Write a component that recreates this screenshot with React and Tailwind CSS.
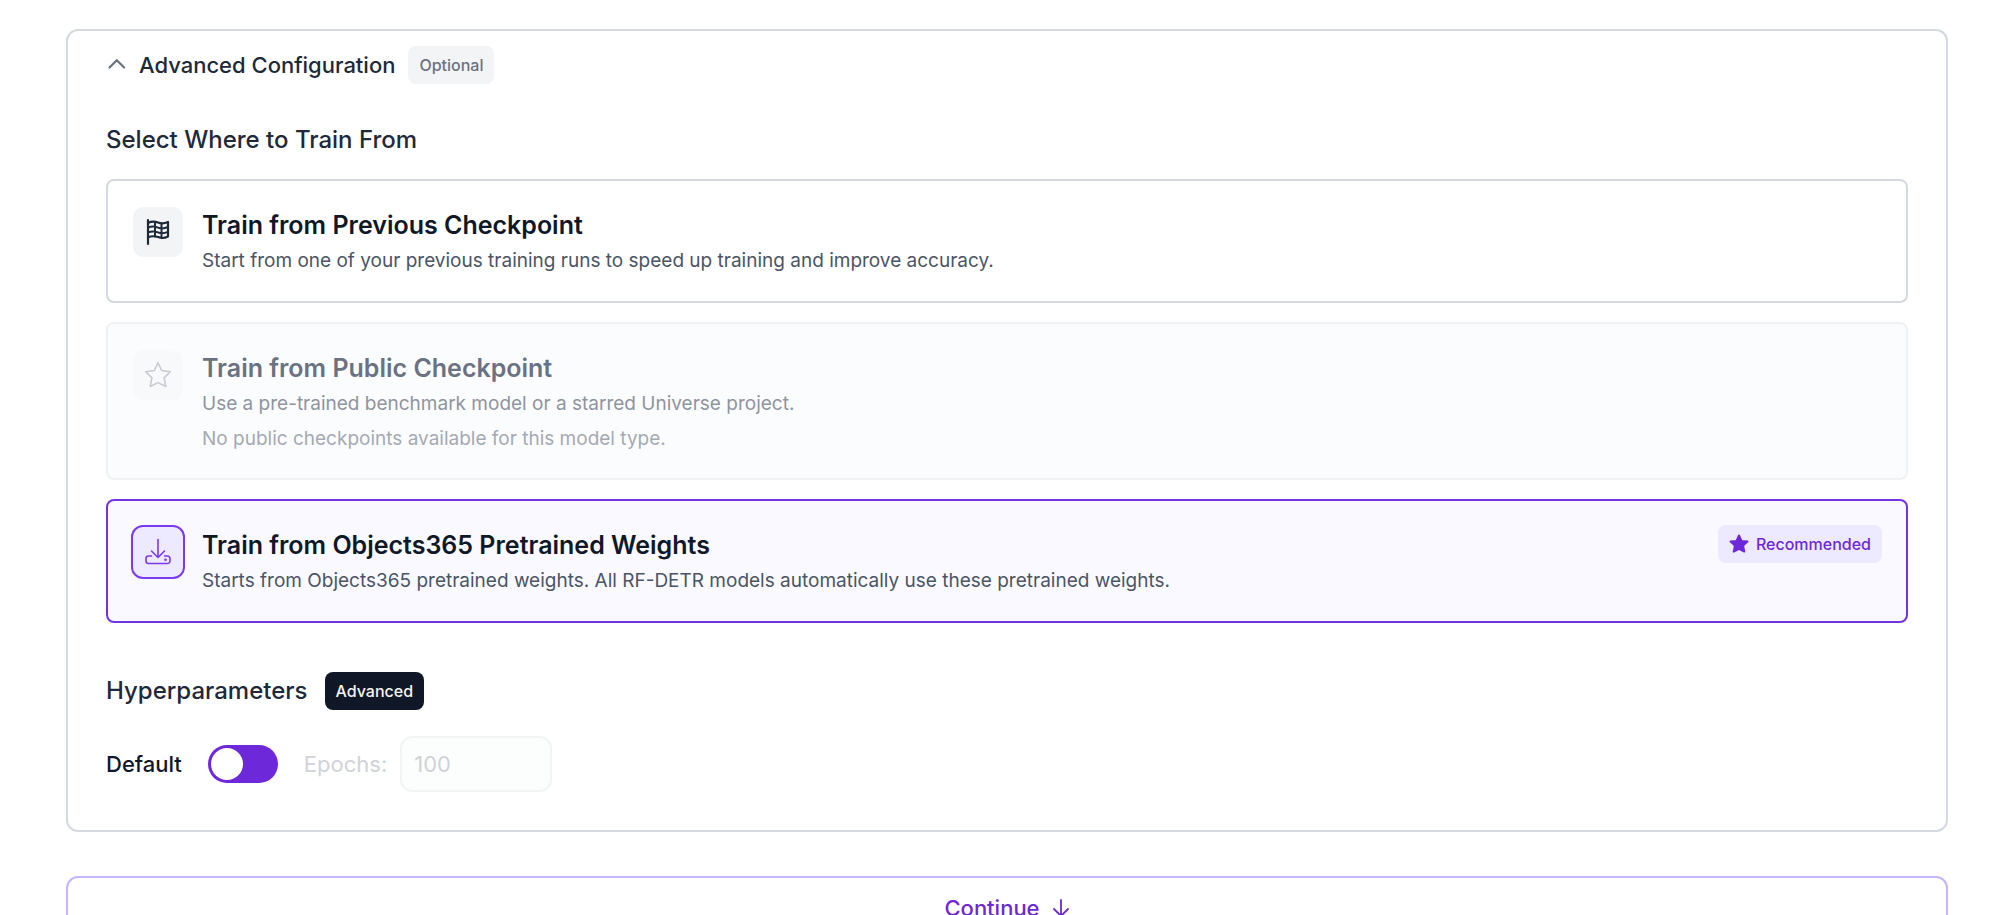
import { useState } from "react";

function FlagIcon({ className }) {
  return (
    <svg viewBox="-2 -1 28 28" fill="none" stroke="currentColor" strokeWidth="2.200" strokeLinecap="round" strokeLinejoin="round" className={className}>
      <path d="M2 1v24" />
      <path d="M2 4c4-2 7-1.600 10-.4s6 1.200 10-.6v14.500c-4 2.200-7 1.800-10 .6s-6-1.200-10 0" />
      <path strokeWidth="2" d="M2 8.600c4-1.600 7-1.200 10 0s6 1.200 10-.6M2 13.400c4-1.600 7-1.200 10 0s6 1.200 10-.6M9 3v14.500M15.500 4.600v14.200" />
    </svg>
  );
}

function StarIcon({ className }) {
  return (
    <svg viewBox="0 0 28 28" fill="none" stroke="currentColor" strokeWidth="1.600" strokeLinejoin="round" className={className}>
      <path d="M14 1.800l3.700 7.700 8.600 1.300-6.200 6.100 1.700 8.600L14 21.600l-7.800 3.900 1.700-8.600-6.200-6.100 8.600-1.300z" />
    </svg>
  );
}

function DownloadIcon({ className }) {
  return (
    <svg viewBox="0 0 28 28" fill="none" stroke="currentColor" strokeWidth="1.600" strokeLinecap="round" strokeLinejoin="round" className={className}>
      <path d="M14 1.500v18M7.500 13l6.500 6.500L20.500 13" />
      <path d="M7.500 18H4.500A2.500 2.500 0 0 0 2 20.500V23a2.500 2.500 0 0 0 2.500 2.500h19A2.500 2.500 0 0 0 26 23v-2.500a2.500 2.500 0 0 0-2.500-2.500H20.500" />
      <circle cx="21.500" cy="21.700" r="1.300" fill="currentColor" stroke="none" />
    </svg>
  );
}

function ChevronIcon({ open }) {
  return (
    <svg
      viewBox="0 0 20 20"
      fill="none"
      stroke="currentColor"
      strokeWidth="2.200"
      strokeLinecap="round"
      strokeLinejoin="round"
      className={open ? "size-5 text-gray-500" : "size-5 rotate-180 text-gray-500"}
    >
      <path d="M3.500 12.500l7.300-7.300 7.300 7.300" />
    </svg>
  );
}

const options = [
  {
    id: "previous",
    title: "Train from Previous Checkpoint",
    description: "Start from one of your previous training runs to speed up training and improve accuracy.",
    icon: FlagIcon,
  },
  {
    id: "public",
    title: "Train from Public Checkpoint",
    description: "Use a pre-trained benchmark model or a starred Universe project.",
    note: "No public checkpoints available for this model type.",
    icon: StarIcon,
    disabled: true,
  },
  {
    id: "pretrained",
    title: "Train from Objects365 Pretrained Weights",
    description: "Starts from Objects365 pretrained weights. All RF-DETR models automatically use these pretrained weights.",
    icon: DownloadIcon,
    recommended: true,
  },
];

function OptionCard({ option, selected, onSelect }) {
  const Icon = option.icon;
  let card = "border-[#d5d8e0] bg-white";
  let tile = "border-transparent bg-gray-100 text-gray-800";
  if (option.disabled) {
    card = "border-[#eff1f4] bg-[#fbfcfe]";
    tile = "border-transparent bg-[#f8f9fb] text-[#c8cbd1]";
  } else if (selected) {
    card = "border-[#7433e0] bg-[#faf9ff]";
    tile = "border-[#7c3aed] bg-[#ede9fe] text-[#7c3aed]";
  }

  return (
    <button
      type="button"
      role="radio"
      aria-checked={selected}
      disabled={option.disabled}
      onClick={onSelect}
      className={`flex w-full items-start gap-[17px] rounded-lg border-2 pt-6 pr-6 pb-[22px] pl-[23px] text-left ${card}`}
    >
      <span className={`flex size-[54px] shrink-0 items-center justify-center rounded-xl border-2 bg-clip-padding ${tile}`}>
        <Icon className="size-7" />
      </span>
      <span className="flex flex-1 flex-col pt-0.5">
        <span className={`text-[25px] leading-9 font-semibold ${option.disabled ? "text-gray-500" : "text-gray-900"}`}>
          {option.title}
        </span>
        <span className={`text-[19px] leading-9 ${option.disabled ? "text-[#8f949e]" : "text-gray-600"}`}>
          {option.description}
        </span>
        {option.note && <span className="text-[19px] leading-[34px] text-[#a5a9b3]">{option.note}</span>}
      </span>
      {option.recommended && (
        <span className="flex h-[38px] items-center gap-[7px] rounded-lg bg-[#ede9fe] px-[11px] text-base font-medium text-[#6d28d9]">
          <svg viewBox="0 0 20 20" fill="currentColor" stroke="currentColor" strokeWidth="2" strokeLinejoin="round" className="size-5">
            <path d="M10 1.500l2.500 5.400 6 .7-4.400 4 1.200 6L10 14.800l-5.300 2.800 1.200-6-4.400-4 6-.7z" />
          </svg>
          Recommended
        </span>
      )}
    </button>
  );
}

export default function App() {
  const [open, setOpen] = useState(true);
  const [source, setSource] = useState("pretrained");
  const [custom, setCustom] = useState(false);
  const [epochs, setEpochs] = useState(100);

  return (
    <main className="h-screen overflow-hidden bg-white pt-[29px] pr-[52px] pl-[66px] font-[Inter,sans-serif] text-gray-800">
      <section className="rounded-xl border-2 border-[#d5d8e0] px-[38px] pt-[15px] pb-[38px]">
        <button type="button" aria-expanded={open} onClick={() => setOpen(!open)} className="flex items-center">
          <ChevronIcon open={open} />
          <span className="ml-[13px] text-[22px] leading-8 font-medium">Advanced Configuration</span>
          <span className="ml-[13px] flex h-[38px] items-center rounded-lg bg-gray-100 px-[11px] text-base font-medium text-gray-500">
            Optional
          </span>
        </button>

        {open && (
          <>
            <h2 className="mt-[38px] text-2xl leading-9 font-medium">Select Where to Train From</h2>
            <div role="radiogroup" aria-label="Select Where to Train From" className="mt-[21px] flex flex-col gap-[19px]">
              {options.map((option) => (
                <OptionCard
                  key={option.id}
                  option={option}
                  selected={source === option.id}
                  onSelect={() => setSource(option.id)}
                />
              ))}
            </div>

            <div className="mt-[49px] flex items-center gap-[17px]">
              <h2 className="text-2xl leading-9 font-medium">Hyperparameters</h2>
              <span className="flex h-[38px] items-center rounded-lg bg-gray-900 px-[11px] text-base font-medium text-gray-100">
                Advanced
              </span>
            </div>

            <div className="mt-[26px] flex items-center">
              <label htmlFor="custom" className="text-[22px] font-medium text-gray-900">
                {custom ? "Custom" : "Default"}
              </label>
              <input
                id="custom"
                type="checkbox"
                role="switch"
                checked={custom}
                onChange={(e) => setCustom(e.target.checked)}
                className="ml-[26px] flex h-[38px] w-[70px] appearance-none items-center rounded-full bg-[#6d28d9] px-[3px] before:size-8 before:rounded-full before:bg-white checked:before:ml-8"
              />
              <label htmlFor="epochs" className={`ml-[26px] text-[22px] ${custom ? "text-gray-700" : "text-[#d0d2d8]"}`}>
                Epochs:
              </label>
              <input
                id="epochs"
                type="number"
                value={epochs}
                disabled={!custom}
                onChange={(e) => setEpochs(e.target.value)}
                className="ml-[13px] h-14 w-[152px] rounded-xl border-2 border-gray-300 px-3 text-[22px] text-gray-800 disabled:border-[#f2f4f5] disabled:bg-[#fcfdfd] disabled:text-[#d0d2d8]"
              />
            </div>
          </>
        )}
      </section>

      <button
        type="button"
        className="mt-11 flex h-16 w-full items-center justify-center gap-3 rounded-xl border-2 border-[#c4b5fd] text-[22px] font-medium text-[#6d28d9]"
      >
        Continue
        <svg viewBox="0 0 18 20" fill="none" stroke="currentColor" strokeWidth="1.800" strokeLinecap="round" strokeLinejoin="round" className="h-5 w-[18px]">
          <path d="M9 2v16M2 11l7 7 7-7" />
        </svg>
      </button>
    </main>
  );
}
